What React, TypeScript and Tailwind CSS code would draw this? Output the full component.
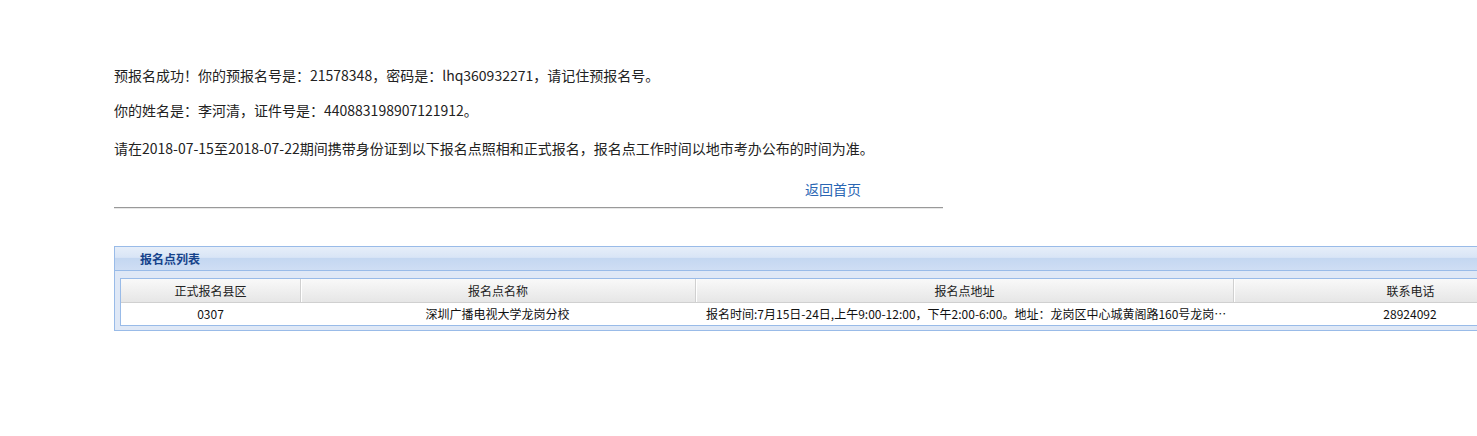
const font = '[font-family:"Microsoft_YaHei","Noto_Sans_CJK_SC",sans-serif]'

const columns = [
  { title: '正式报名县区', width: 'w-[179px]' },
  { title: '报名点名称', width: 'w-[395px]' },
  { title: '报名点地址', width: 'w-[538px]' },
  { title: '联系电话', width: 'w-[354px]' },
]

const rows = [
  [
    '0307',
    '深圳广播电视大学龙岗分校',
    '报名时间:7月15日-24日,上午9:00-12:00，下午2:00-6:00。地址：龙岗区中心城黄阁路160号龙岗…',
    '28924092',
  ],
]

export default function App() {
  return (
    <div className={`w-[1477px] h-[436px] overflow-hidden bg-white text-[#222] ${font}`}>
      <div className="pl-[114px] pt-[65px]">
        <p className="text-[14px] leading-[20px]">
          预报名成功！你的预报名号是：21578348，密码是：lhq360932271，请记住预报名号。
        </p>
        <p className="text-[14px] leading-[20px] mt-[15px]">
          你的姓名是：李河清，证件号是：440883198907121912。
        </p>
        <p className="text-[14px] leading-[20px] mt-[18px]">
          请在2018-07-15至2018-07-22期间携带身份证到以下报名点照相和正式报名，报名点工作时间以地市考办公布的时间为准。
        </p>
        <div className="w-[829px] mt-[21px]">
          <a href="#" className="ml-[691px] block w-fit text-[14px] leading-[20px] text-[#2a66b3]">
            返回首页
          </a>
          <div className="mt-[8px] h-[2px] border-t border-[#999] border-b border-b-[#e8e8e8]" />
        </div>

        <div className="mt-[37px] w-[1478px] border border-[#99bbe8] bg-[#dfe8f6]">
          <div className="h-[24px] border-b border-[#99bbe8] bg-[linear-gradient(#e6eef9_0%,#d9e5f6_45%,#c4d7f1_50%,#cfdef4_100%)] pl-[25px] text-[12px] leading-[23px] font-bold text-[#15428b]">
            报名点列表
          </div>
          <div className="px-[5px] pt-[7px] pb-[4px]">
            <div className="border border-[#99bbe8] bg-white">
              <div className="flex h-[24px] border-b border-[#d0d0d0] bg-[linear-gradient(#f9f9f9,#e6e6e6)] text-[12px] leading-[23px] text-[#222]">
                {columns.map((c, i) => (
                  <div
                    key={c.title}
                    className={`${c.width} shrink-0 text-center ${i > 0 ? 'border-l border-l-[#d0d0d0] shadow-[inset_1px_0_0_#fff]' : ''}`}
                  >
                    {c.title}
                  </div>
                ))}
              </div>
              {rows.map((r) => (
                <div key={r[0]} className="flex h-[22px] text-[12px] leading-[21px] text-[#111]">
                  {r.map((v, i) => (
                    <div
                      key={i}
                      className={`${columns[i].width} shrink-0 whitespace-nowrap ${i === 2 ? 'pl-[11px] text-left' : 'text-center'}`}
                    >
                      {v}
                    </div>
                  ))}
                </div>
              ))}
            </div>
          </div>
        </div>
      </div>
    </div>
  )
}
